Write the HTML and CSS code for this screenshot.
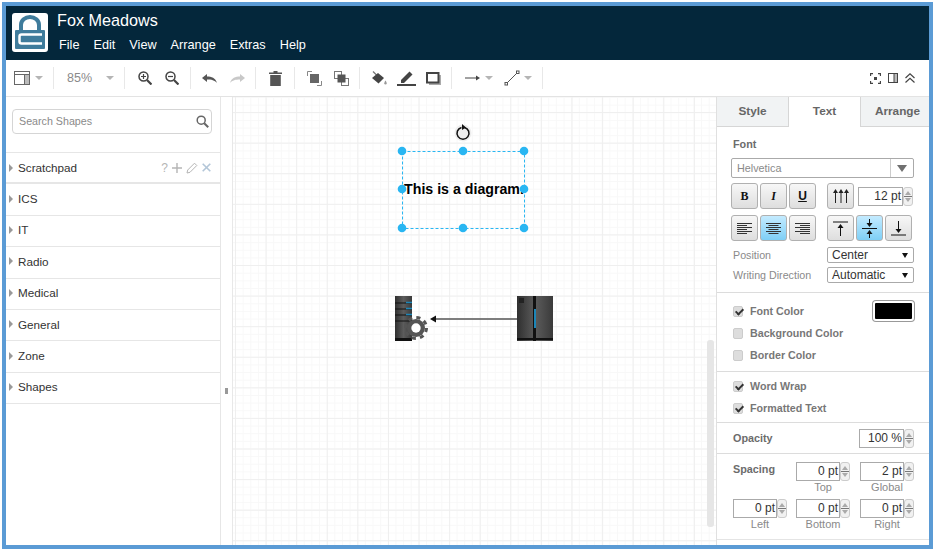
FILE: index.html
```html
<!DOCTYPE html>
<html lang="en">
<head>
    <meta charset="UTF-8">
    <title>Fox Meadows</title>
    <link rel="stylesheet" href="styles.css">
</head>
<body>
<div class="frame">
    <header class="header">
        <svg class="logo" viewBox="0 0 36 39">
            <rect width="36" height="39" rx="3" fill="#fff"/>
            <path d="M9 18V12a9 8 0 0 1 18 0v6" fill="none" stroke="#3f7c9c" stroke-width="4"/>
            <rect x="3" y="17" width="30" height="19" rx="1" fill="#3f7c9c"/>
            <path d="M30 21.500H9.500a2 2 0 0 0-2 2v5a2 2 0 0 0 2 2H30" fill="none" stroke="#fff" stroke-width="2.500"/>
        </svg>
        <div class="header-text">
            <div class="title">Fox Meadows</div>
            <nav class="menu">
                <span>File</span><span>Edit</span><span>View</span><span>Arrange</span><span>Extras</span><span>Help</span>
            </nav>
        </div>
    </header>

    <div class="toolbar">
        <div class="group g1">
            <svg width="16" height="16" viewBox="0 0 16 16"><rect x=".5" y="1.500" width="15" height="13" fill="#fff" stroke="#666"/><path d="M.5 4.500h15M10.500 4.500v10" stroke="#666"/><rect x="11" y="5" width="4" height="9" fill="#bbb"/></svg>
            <i class="caret"></i>
        </div>
        <div class="group g2"><span class="zoom-val">85%</span><i class="caret"></i></div>
        <div class="group g3">
            <svg width="14" height="14" viewBox="0 0 14 14" fill="none" stroke="#444" stroke-width="1.500"><circle cx="5.500" cy="5.500" r="4.500"/><path d="M9 9l4.500 4.500" stroke-width="2.200"/><path d="M3 5.500h5M5.500 3v5" stroke-width="1.200"/></svg>
            <svg width="14" height="14" viewBox="0 0 14 14" fill="none" stroke="#444" stroke-width="1.500"><circle cx="5.500" cy="5.500" r="4.500"/><path d="M9 9l4.500 4.500" stroke-width="2.200"/><path d="M3 5.500h5" stroke-width="1.200"/></svg>
        </div>
        <div class="group g4">
            <svg width="15" height="10" viewBox="0 0 15 10"><path d="M0 5L5 1v2.600c4.500 0 8.500 1.500 10 6.400-2.500-3-5.500-3.600-10-3.600V9z" fill="#555"/></svg>
            <svg width="15" height="10" viewBox="0 0 15 10"><path d="M15 5L10 1v2.600C5.500 3.600 1.500 5.100 0 10c2.500-3 5.500-3.600 10-3.600V9z" fill="#c8c8c8"/></svg>
        </div>
        <div class="group g5">
            <svg width="13" height="15" viewBox="0 0 13 15"><path d="M0 1.500h4.500V0h4v1.500H13V3H0zM1.200 4h10.600v11H1.200z" fill="#555"/></svg>
        </div>
        <div class="group g6">
            <svg width="15" height="15" viewBox="0 0 15 15"><path d="M.5 5V.5H5M10 14.500h4.500V10" fill="none" stroke="#888"/><rect x="3" y="3" width="9" height="9" fill="#666"/></svg>
            <svg width="15" height="15" viewBox="0 0 15 15"><rect x=".5" y=".5" width="7" height="7" fill="#fff" stroke="#777"/><rect x="7.500" y="7.500" width="7" height="7" fill="#fff" stroke="#777"/><rect x="3.500" y="3.500" width="8" height="8" fill="#555"/></svg>
        </div>
        <div class="group g7">
            <svg width="16" height="15" viewBox="0 0 16 15"><path d="M2 .5l5 5" stroke="#777" stroke-width="1.200"/><path d="M1 7l6-5 6 5-5.500 5.500z" fill="#444"/><path d="M14.500 9.500c.8 1.300 1.200 2 1.200 2.700a1.200 1.200 0 0 1-2.400 0c0-.7.400-1.400 1.200-2.700z" fill="#999"/></svg>
            <svg width="19" height="16" viewBox="0 0 19 16"><path d="M4 10L12.500 1.500l3 3L7 13H4z" fill="#444"/><rect y="14" width="19" height="2" fill="#444"/></svg>
            <svg width="15" height="13" viewBox="0 0 15 13"><rect x="3" y="3" width="12" height="10" fill="#aaa"/><rect x="1" y="1" width="11.500" height="9.500" fill="#fff" stroke="#444" stroke-width="2"/></svg>
        </div>
        <div class="group g8">
            <svg width="15" height="8" viewBox="0 0 15 8"><path d="M0 4h12" stroke="#444"/><path d="M11 1.500L15 4l-4 2.500z" fill="#444"/></svg>
            <i class="caret"></i>
        </div>
        <div class="group g9">
            <svg width="16" height="16" viewBox="0 0 16 16" fill="none" stroke="#555"><path d="M3 13L13.500 2.500"/><rect x="1" y="12.500" width="2.500" height="2.500" fill="#fff"/><rect x="12.500" y="1" width="2.500" height="2.500" fill="#fff"/></svg>
            <i class="caret"></i>
        </div>
        <div class="toolbar-right">
            <svg width="11" height="11" viewBox="0 0 11 11" fill="none" stroke="#444" stroke-width="1.300"><path d="M.5 3V.5H3M8 .5h2.500V3M10.500 8v2.500H8M3 10.500H.5V8"/><rect x="4" y="4" width="3" height="3" fill="#444" stroke="none"/></svg>
            <svg width="10" height="10" viewBox="0 0 10 10" fill="none" stroke="#444"><rect x=".5" y=".5" width="9" height="9"/><rect x="6" y="1" width="3" height="8" fill="#bbb" stroke="none"/><path d="M6 .5v9"/></svg>
            <svg width="10" height="10" viewBox="0 0 10 10" fill="none" stroke="#444" stroke-width="1.200"><path d="M.5 5L5 .8 9.500 5M.5 9.500L5 5.300l4.500 4.200"/></svg>
        </div>
    </div>

    <main class="main">
        <aside class="sidebar">
            <div class="search-wrap">
                <div class="search">
                    <span>Search Shapes</span>
                    <svg width="13" height="13" viewBox="0 0 13 13" fill="none" stroke="#666" stroke-width="1.500"><circle cx="5.200" cy="5.200" r="4"/><path d="M8.200 8.200l4 4" stroke-width="2"/></svg>
                </div>
            </div>
            <div class="section section-first">
                <i class="arrow"></i>Scratchpad
                <span class="section-tools">
                    <span class="tool-q">?</span>
                    <svg width="10" height="10" viewBox="0 0 10 10"><path d="M4.300 0h1.400v4.300H10v1.400H5.700V10H4.300V5.700H0V4.300h4.300z" fill="#b5b5b5"/></svg>
                    <svg width="12" height="12" viewBox="0 0 12 12" fill="none" stroke="#b5b5b5"><path d="M1 11l.7-3L8.500 1.200l2.300 2.300L4 10.300z"/></svg>
                    <svg width="9" height="9" viewBox="0 0 9 9"><path d="M.7.700l7.600 7.600M8.300.700L.7 8.300" stroke="#b3c6d8" stroke-width="1.600"/></svg>
                </span>
            </div>
            <div class="section"><i class="arrow"></i>ICS</div>
            <div class="section"><i class="arrow"></i>IT</div>
            <div class="section"><i class="arrow"></i>Radio</div>
            <div class="section"><i class="arrow"></i>Medical</div>
            <div class="section"><i class="arrow"></i>General</div>
            <div class="section"><i class="arrow"></i>Zone</div>
            <div class="section"><i class="arrow"></i>Shapes</div>
        </aside>

        <div class="splitter"><i class="grip"></i></div>

        <section class="canvas">
            <svg class="diagram" viewBox="233 97 483 448" width="483" height="448">
                <defs>
                    <linearGradient id="metal" x1="0" x2="1" y1="0" y2="0">
                        <stop offset="0" stop-color="#2f2f2f"/>
                        <stop offset=".5" stop-color="#5c5c5c"/>
                        <stop offset="1" stop-color="#3a3a3a"/>
                    </linearGradient>
                </defs>

                <!-- rotate handle -->
                <circle cx="463" cy="133" r="8.500" fill="#eee"/>
                <path d="M464.500 127.400a6 6 0 1 1-3 0" fill="none" stroke="#111" stroke-width="1.500"/>
                <path d="M462 124l4 3.500-4 2.500z" fill="#111"/>

                <!-- selected box -->
                <rect x="402.500" y="151.500" width="122" height="77" fill="none" stroke="#29b6f2" stroke-dasharray="3 2"/>
                <text class="diagram-label" x="464" y="194" text-anchor="middle">This is a diagram.</text>
                <g fill="#29b6f2">
                    <circle cx="402" cy="151" r="4.300"/><circle cx="463" cy="151" r="4.300"/><circle cx="524" cy="151" r="4.300"/>
                    <circle cx="402" cy="189" r="4.300"/><circle cx="524" cy="189" r="4.300"/>
                    <circle cx="402" cy="228" r="4.300"/><circle cx="463" cy="228" r="4.300"/><circle cx="524" cy="228" r="4.300"/>
                </g>

                <!-- server with gear -->
                <rect x="395" y="296" width="17" height="45" fill="url(#metal)"/>
                <path d="M395 303h17M395 309h17M395 315h17M395 321h17" stroke="#111"/>
                <path d="M406 302.500h6M406 308.500h6M406 314.500h6" stroke="#1c86b8" stroke-width="1.500"/>
                <rect x="395" y="338" width="17" height="3" fill="#111"/>
                <circle cx="416" cy="328" r="9" fill="#555"/>
                <circle cx="416" cy="328" r="10.500" fill="none" stroke="#555" stroke-width="3" stroke-dasharray="4.100 4.150"/>
                <circle cx="416" cy="328" r="4.700" fill="#fff"/>

                <!-- connector -->
                <path d="M517 319H433" stroke="#555" stroke-width="1.300"/>
                <path d="M430 319l6-3.500v7z" fill="#111"/>

                <!-- rack -->
                <rect x="517" y="296" width="36" height="45" fill="url(#metal)"/>
                <rect x="533" y="296" width="3" height="45" fill="#111"/>
                <rect x="534" y="309" width="2" height="19" fill="#1c86b8"/>
                <rect x="517" y="338" width="36" height="2" fill="#111"/>
                <rect x="519" y="298" width="5" height="5" fill="#222"/>

                <!-- scrollbar -->
                <rect x="707" y="340" width="7" height="187" rx="3" fill="#e6e6e6"/>
            </svg>
        </section>

        <aside class="panel">
            <div class="tabs">
                <div class="tab tab-style">Style</div>
                <div class="tab tab-text active">Text</div>
                <div class="tab tab-arrange">Arrange</div>
            </div>

            <div class="block block-font">
                <div class="heading">Font</div>
                <div class="font-select"><span>Helvetica</span><b class="font-caret"></b></div>
                <div class="btn-row">
                    <div class="btn-set">
                        <div class="btn btn-b">B</div>
                        <div class="btn btn-i">I</div>
                        <div class="btn btn-u">U</div>
                    </div>
                    <div class="btn">
                        <svg width="16" height="14" viewBox="0 0 16 14" stroke="#222" fill="#222"><path d="M2.500 3v11M8 3v11M13.500 3v11"/><path d="M2.500 0L5 4H0zM8 0l2.500 4h-5zM13.500 0L16 4h-5z" stroke="none"/></svg>
                    </div>
                    <div class="num num-size"><span class="num-val">12 pt</span><span class="spin"></span></div>
                </div>
                <div class="btn-row">
                    <div class="btn-set">
                        <div class="btn"><svg width="15" height="11" viewBox="0 0 15 11" stroke="#333"><path d="M0 .5h15M0 2.500h10M0 4.500h15M0 6.500h10M0 8.500h15M0 10.500h10"/></svg></div>
                        <div class="btn on"><svg width="15" height="11" viewBox="0 0 15 11" stroke="#333"><path d="M0 .5h15M2.500 2.500h10M0 4.500h15M2.500 6.500h10M0 8.500h15M2.500 10.500h10"/></svg></div>
                        <div class="btn"><svg width="15" height="11" viewBox="0 0 15 11" stroke="#333"><path d="M0 .5h15M5 2.500h10M0 4.500h15M5 6.500h10M0 8.500h15M5 10.500h10"/></svg></div>
                    </div>
                    <div class="btn-set btn-set-v">
                        <div class="btn"><svg width="15" height="15" viewBox="0 0 15 15" stroke="#111"><path d="M0 1h15M7.500 5v10"/><path d="M7.500 3l3 4h-6z" fill="#111" stroke="none"/></svg></div>
                        <div class="btn on"><svg width="15" height="19" viewBox="0 0 15 19" stroke="#111"><path d="M0 9.500h15M7.500 0v5M7.500 14v5"/><path d="M7.500 8l-3-4h6zM7.500 11l3 4h-6z" fill="#111" stroke="none"/></svg></div>
                        <div class="btn"><svg width="15" height="15" viewBox="0 0 15 15" stroke="#111"><path d="M0 14h15M7.500 0v10"/><path d="M7.500 12l-3-4h6z" fill="#111" stroke="none"/></svg></div>
                    </div>
                </div>
                <div class="field-row">
                    <span class="field-label">Position</span>
                    <div class="select"><span>Center</span><i class="select-caret"></i></div>
                </div>
                <div class="field-row">
                    <span class="field-label">Writing Direction</span>
                    <div class="select"><span>Automatic</span><i class="select-caret"></i></div>
                </div>
            </div>

            <div class="block block-colors">
                <div class="check-row"><i class="check on"></i>Font Color<span class="swatch"></span></div>
                <div class="check-row"><i class="check"></i>Background Color</div>
                <div class="check-row"><i class="check"></i>Border Color</div>
            </div>

            <div class="block block-wrap">
                <div class="check-row"><i class="check on"></i>Word Wrap</div>
                <div class="check-row"><i class="check on"></i>Formatted Text</div>
            </div>

            <div class="block block-opacity">
                <span class="heading">Opacity</span>
                <div class="num num-size"><span class="num-val">100 %</span><span class="spin"></span></div>
            </div>

            <div class="block block-spacing">
                <div class="spacing-grid">
                    <div class="heading spacing-title">Spacing</div>
                    <div class="spacing-cell"><div class="num"><span class="num-val">0 pt</span><span class="spin"></span></div><label>Top</label></div>
                    <div class="spacing-cell"><div class="num"><span class="num-val">2 pt</span><span class="spin"></span></div><label>Global</label></div>
                    <div class="spacing-cell"><div class="num"><span class="num-val">0 pt</span><span class="spin"></span></div><label>Left</label></div>
                    <div class="spacing-cell"><div class="num"><span class="num-val">0 pt</span><span class="spin"></span></div><label>Bottom</label></div>
                    <div class="spacing-cell"><div class="num"><span class="num-val">0 pt</span><span class="spin"></span></div><label>Right</label></div>
                </div>
            </div>
        </aside>
    </main>
</div>
</body>
</html>
```

FILE: styles.css
```css
* {
    box-sizing: border-box;
}
html, body {
    margin: 0;
    height: 100%;
    background: #fff;
    overflow: hidden;
}
body {
    font-family: "Liberation Sans", Arial, sans-serif;
    padding: 2px 0 0 2px;
}
.frame {
    width: 931px;
    height: 547px;
    border: 4px solid #5b9bd5;
    display: flex;
    flex-direction: column;
    overflow: hidden;
}

/* header */
.header {
    height: 54px;
    flex: none;
    background: #04273b;
    display: flex;
    padding: 7px 0 0 6px;
    color: #fff;
}
.logo {
    width: 36px;
    height: 39px;
}
.header-text {
    margin: -2px 0 0 9px;
}
.title {
    font-size: 16.2px;
    line-height: 19px;
}
.menu {
    display: flex;
    gap: 14px;
    margin: 7px 0 0 2px;
    font-size: 12.7px;
    line-height: 16px;
}

/* toolbar */
.toolbar {
    height: 37px;
    flex: none;
    display: flex;
    align-items: center;
    border-bottom: 1px solid #e3e3e3;
}
.group {
    height: 22px;
    display: flex;
    align-items: center;
    border-right: 1px solid #e8e8e8;
    padding-left: 8px;
}
.g1 { width: 48px; gap: 5px; }
.g2 { width: 71px; padding-left: 13px; gap: 14px; }
.g3 { width: 66px; padding-left: 13px; gap: 13px; }
.g4 { width: 65px; padding-left: 11px; gap: 13px; }
.g5 { width: 39px; padding-left: 13px; }
.g6 { width: 65px; padding-left: 12px; gap: 12px; }
.g7 { width: 92px; padding-left: 11px; gap: 10px; }
.g8 { width: 45px; padding-left: 13px; gap: 5px; border-right: 0; }
.g9 { width: 46px; padding-left: 7px; gap: 4px; }
.zoom-val {
    font-size: 12.5px;
    color: #8a8a8a;
}
.caret {
    width: 0;
    height: 0;
    border-left: 4px solid transparent;
    border-right: 4px solid transparent;
    border-top: 4px solid #b5b5b5;
}
.toolbar-right {
    margin-left: auto;
    padding-right: 14px;
    display: flex;
    align-items: center;
    gap: 7px;
}

/* main area */
.main {
    flex: 1;
    display: flex;
    min-height: 0;
}
.sidebar {
    width: 215px;
    flex: none;
    border-right: 1px solid #e6e6e6;
}
.search-wrap {
    height: 56px;
    padding: 12px 8px 0 6px;
    border-bottom: 1px solid #e6e6e6;
}
.search {
    height: 25px;
    border: 1px solid #d5d5d5;
    border-radius: 4px;
    display: flex;
    align-items: center;
    justify-content: space-between;
    padding: 0 2px 1px 6px;
    font-size: 10.7px;
    color: #8a8a8a;
}
.section {
    height: 31.4px;
    display: flex;
    align-items: center;
    padding: 0 0 2px 3px;
    font-size: 11.7px;
    color: #333;
    border-bottom: 1px solid #e6e6e6;
}
.section-first {
    padding-bottom: 0;
    border-bottom-width: 2px;
}
.arrow {
    width: 0;
    height: 0;
    margin-right: 5px;
    border-top: 4px solid transparent;
    border-bottom: 4px solid transparent;
    border-left: 4px solid #999;
}
.section-tools {
    margin-left: auto;
    padding-right: 9px;
    display: flex;
    align-items: center;
    gap: 4px;
}
.tool-q {
    color: #b5b5b5;
    font-size: 12px;
}
.splitter {
    width: 12px;
    flex: none;
    border-right: 1px solid #e8e8e8;
    position: relative;
}
.grip {
    position: absolute;
    left: 4px;
    top: 291px;
    width: 3px;
    height: 6px;
    background: #999;
}
.canvas {
    width: 483px;
    flex: none;
    position: relative;
    overflow: hidden;
    background-color: #fff;
    background-image:
        linear-gradient(#efefef 1px, transparent 1px),
        linear-gradient(90deg, #efefef 1px, transparent 1px),
        linear-gradient(#f8f8f8 1px, transparent 1px),
        linear-gradient(90deg, #f8f8f8 1px, transparent 1px);
    background-size: 30.6px 30.6px, 30.6px 30.6px, 7.65px 7.65px, 7.65px 7.65px;
    background-position: 2px 15px, 2px 15px, 2px 0, 2px 0;
}
.diagram {
    position: absolute;
    left: 0;
    top: 0;
}
.diagram-label {
    font-family: "Liberation Sans", Arial, sans-serif;
    font-weight: bold;
    font-size: 14.2px;
    fill: #000;
}

/* format panel */
.panel {
    flex: 1;
    border-left: 1px solid #e0e0e0;
    min-width: 0;
    color: #666;
    font-size: 11.5px;
}
.tabs {
    height: 30px;
    display: flex;
    font-weight: bold;
    font-size: 11.8px;
    text-align: center;
}
.tab {
    background: #f1f3f4;
    border-bottom: 1px solid #d6d6d6;
    line-height: 28px;
    color: #666;
}
.tab-style { width: 71px; }
.tab-text { width: 73px; border-left: 1px solid #d6d6d6; border-right: 1px solid #d6d6d6; }
.tab-arrange { flex: 1; padding-left: 5px; }
.tab.active {
    background: #fff;
    border-bottom: 0;
    line-height: 29px;
}
.block {
    border-bottom: 1px solid #dcdcdc;
    padding-left: 16px;
    padding-right: 15px;
}
.block-font {
    height: 166px;
    padding-left: 14px;
    padding-top: 11px;
}
.block-font .heading {
    padding-left: 2px;
}
.heading {
    font-weight: bold;
    font-size: 10.8px;
    color: #6c6c6c;
}
.font-select {
    height: 20px;
    margin-top: 8px;
    border: 1px solid #aaa;
    border-radius: 2px;
    display: flex;
    align-items: center;
    justify-content: space-between;
    padding-left: 5px;
    color: #8a8a8a;
    font-size: 10.8px;
}
.font-caret {
    width: 23px;
    height: 100%;
    border-left: 1px solid #ccc;
    position: relative;
}
.font-caret::after {
    content: "";
    position: absolute;
    left: 6px;
    top: 6px;
    border-left: 5px solid transparent;
    border-right: 5px solid transparent;
    border-top: 7px solid #707070;
}
.btn-row {
    display: flex;
    margin-top: 5px;
    height: 26px;
    align-items: center;
}
.btn-row + .btn-row {
    margin-top: 6px;
}
.btn-set {
    display: flex;
    gap: 2px;
    margin-right: 11px;
}
.btn-set-v {
    margin-right: 0;
}
.btn {
    width: 27px;
    height: 26px;
    border: 1px solid #b0b0b0;
    border-radius: 3px;
    background: linear-gradient(#f7f7f7, #dedede);
    display: flex;
    align-items: center;
    justify-content: center;
    color: #111;
    font-size: 12px;
    font-family: "Liberation Serif", serif;
    font-weight: bold;
}
.btn.on {
    background: linear-gradient(#c4ebff, #7ecff6);
}
.btn-i {
    font-style: italic;
}
.btn-u {
    text-decoration: underline;
    font-family: "Liberation Sans", sans-serif;
}
.num {
    width: 54px;
    height: 19px;
    display: flex;
    position: relative;
}
.num-size {
    margin-left: 4px;
    width: 55px;
}
.num-val {
    flex: 1;
    border: 1px solid #aaa;
    font-size: 12px;
    line-height: 17px;
    text-align: right;
    padding-right: 1px;
    color: #333;
    background: #fff;
}
.spin {
    width: 10px;
    height: 19px;
    border: 1px solid #ccc;
    border-radius: 3px;
    background: linear-gradient(#777, #777) 50% 50% / 8px 1px no-repeat, #f1f1f1;
    position: relative;
}
.spin::before, .spin::after {
    content: "";
    position: absolute;
    left: 1px;
    border-left: 3px solid transparent;
    border-right: 3px solid transparent;
}
.spin::before {
    top: 3px;
    border-bottom: 4px solid #aaa;
}
.spin::after {
    bottom: 3px;
    border-top: 4px solid #aaa;
}
.field-row {
    display: flex;
    justify-content: space-between;
    align-items: center;
    height: 16px;
    margin-top: 4px;
}
.btn-row + .field-row {
    margin-top: 6px;
}
.field-label {
    padding-left: 2px;
    font-size: 10.7px;
    color: #8a8a8a;
}
.select {
    width: 87px;
    height: 16px;
    border: 1px solid #aaa;
    border-radius: 2px;
    display: flex;
    align-items: center;
    justify-content: space-between;
    padding: 0 5px 0 4px;
    font-size: 12px;
    color: #333;
    background: #fff;
}
.select-caret {
    border-left: 3px solid transparent;
    border-right: 3px solid transparent;
    border-top: 5px solid #111;
}
.block-colors {
    height: 79px;
    padding-top: 7px;
}
.block-wrap {
    height: 51px;
    padding-top: 3px;
}
.check-row {
    display: flex;
    align-items: center;
    height: 22px;
    font-weight: bold;
    font-size: 10.7px;
    color: #777;
    position: relative;
}
.check {
    width: 10px;
    height: 11px;
    margin-right: 7px;
    border-radius: 2px;
    border: 1px solid #ccc;
    background: #ddd;
    position: relative;
}
.check.on::after {
    content: "";
    position: absolute;
    left: 3px;
    top: 0;
    width: 3px;
    height: 6px;
    border: solid #333;
    border-width: 0 2px 2px 0;
    transform: rotate(45deg);
}
.swatch {
    margin-left: auto;
    width: 41px;
    height: 20px;
    background: #000;
    border: 2px solid #fff;
    border-radius: 3px;
    box-shadow: 0 0 0 1px #999;
}
.block-opacity {
    height: 31px;
    display: flex;
    align-items: center;
    justify-content: space-between;
}
.block-spacing {
    height: 86px;
    padding-top: 8px;
    border-bottom: 1px solid #e4e4e4;
}
.spacing-grid {
    display: grid;
    grid-template-columns: 63px 64px 54px;
    grid-auto-rows: 37px;
}
.spacing-cell label {
    display: block;
    width: 54px;
    text-align: center;
    font-size: 11px;
    line-height: 13px;
    color: #8a8a8a;
}
.spacing-title {
    padding-top: 1px;
}
```
